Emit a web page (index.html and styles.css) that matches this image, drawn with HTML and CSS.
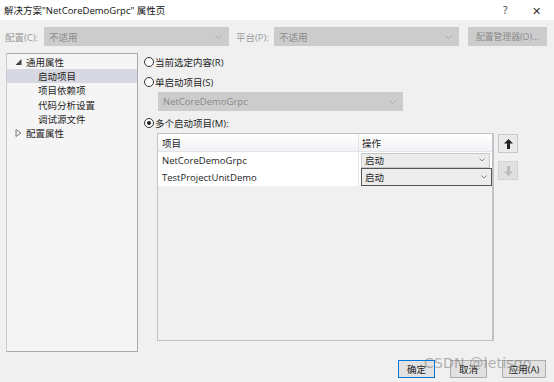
FILE: index.html
```html
<!DOCTYPE html>
<html lang="zh-CN">
<head>
  <meta charset="UTF-8" />
  <title>解决方案"NetCoreDemoGrpc" 属性页</title>
  <link rel="stylesheet" href="styles.css">
</head>
<body>
  <div class="dialog">
    <div class="titlebar">
      <span class="title">解决方案"NetCoreDemoGrpc" 属性页</span>
      <span class="help">?</span>
      <span class="close">✕</span>
    </div>

    <div class="toolbar">
      <span class="lbl">配置(C):</span>
      <div class="combo combo-off w185"><span>不适用</span><svg class="chev" width="7" height="4" viewBox="0 0 7 4"><polyline points="0.5,0.5 3.5,3.5 6.5,0.5" fill="none" stroke="#a8a8a8" stroke-width="1"/></svg></div>
      <span class="lbl lbl2">平台(P):</span>
      <div class="combo combo-off w185"><span>不适用</span><svg class="chev" width="7" height="4" viewBox="0 0 7 4"><polyline points="0.5,0.5 3.5,3.5 6.5,0.5" fill="none" stroke="#a8a8a8" stroke-width="1"/></svg></div>
      <div class="btn btn-off cfg">配置管理器(O)...</div>
    </div>

    <div class="main">
      <div class="tree">
        <div class="node"><svg class="twist" width="6" height="6" viewBox="0 0 6 6"><polygon points="6,0 6,6 0,6" fill="#444"/></svg>通用属性</div>
        <div class="node child selected">启动项目</div>
        <div class="node child">项目依赖项</div>
        <div class="node child">代码分析设置</div>
        <div class="node child">调试源文件</div>
        <div class="node"><svg class="twist" width="6" height="8" viewBox="0 0 6 8"><polygon points="0.5,0.5 5.5,4 0.5,7.5" fill="none" stroke="#777" stroke-width="1"/></svg>配置属性</div>
      </div>

      <div class="content">
        <label class="radio"><span class="dot"></span>当前选定内容(R)</label>
        <label class="radio"><span class="dot"></span>单启动项目(S)</label>
        <div class="combo combo-off single"><span>NetCoreDemoGrpc</span><svg class="chev" width="7" height="4" viewBox="0 0 7 4"><polyline points="0.5,0.5 3.5,3.5 6.5,0.5" fill="none" stroke="#a8a8a8" stroke-width="1"/></svg></div>
        <label class="radio"><span class="dot on"></span>多个启动项目(M):</label>

        <div class="grid-row">
          <div class="table">
            <div class="thead">
              <div class="c1">项目</div>
              <div class="c2">操作</div>
            </div>
            <div class="tr">
              <div class="c1">NetCoreDemoGrpc</div>
              <div class="c2"><div class="combo cell"><span>启动</span><svg class="chev" width="6" height="4" viewBox="0 0 6 4"><polyline points="0.5,0.5 3,3 5.5,0.5" fill="none" stroke="#888" stroke-width="1"/></svg></div></div>
            </div>
            <div class="tr">
              <div class="c1">TestProjectUnitDemo</div>
              <div class="c2"><div class="combo cell focus"><span>启动</span><svg class="chev" width="6" height="4" viewBox="0 0 6 4"><polyline points="0.5,0.5 3,3 5.5,0.5" fill="none" stroke="#888" stroke-width="1"/></svg></div></div>
            </div>
          </div>
          <div class="movers">
            <div class="mv"><svg width="9" height="10" viewBox="0 0 9 10"><polygon points="4.5,0 9,4.5 6,4.5 6,10 3,10 3,4.5 0,4.5" fill="#222"/></svg></div>
            <div class="mv mv-off"><svg width="9" height="10" viewBox="0 0 9 10"><polygon points="4.5,10 9,5.5 6,5.5 6,0 3,0 3,5.5 0,5.5" fill="#bdbdbd"/></svg></div>
          </div>
        </div>
      </div>
    </div>

    <div class="footer">
      <div class="btn default">确定</div>
      <div class="btn">取消</div>
      <div class="btn">应用(A)</div>
      <span class="watermark">CSDN @letisgo</span>
    </div>
  </div>
</body>
</html>
```
FILE: styles.css
```css
body { margin: 0; background: #f0f0f0; font-family: "Open Sans", "Noto Sans CJK SC", sans-serif; font-size: 9.5px; color: #1e1e1e; }
.dialog { width: 554px; height: 382px; position: relative; overflow: hidden; }

.titlebar { height: 20px; background: #fff; display: flex; align-items: center; padding-left: 4px; }
.title { flex: 1; font-size: 9.5px; color: #111; }
.help { width: 12px; font-size: 10.5px; color: #333; margin-right: 17px; }
.close { font-size: 11px; color: #333; margin-right: 13px; }

.toolbar { display: flex; align-items: center; height: 19px; margin-top: 7px; padding-left: 5px; }
.lbl { color: #9a9a9a; width: 39px; }
.lbl2 { margin-left: 7px; width: 38px; }
.combo { display: flex; align-items: center; justify-content: space-between; box-sizing: border-box; padding: 0 6px 0 4px; }
.combo-off { background: #cccccc; border: 1px solid #cccccc; color: #8a8a8a; height: 19px; }
.w185 { width: 185px; }
.btn { display: flex; align-items: center; justify-content: center; box-sizing: border-box; height: 18px; background: #e1e1e1; border: 1px solid #adadad; color: #1e1e1e; white-space: nowrap; }
.btn-off { background: #cccccc; border-color: #cccccc; color: #8a8a8a; }
.cfg { width: 79px; margin-left: 9px; height: 19px; font-size: 8.8px; }

.main { display: flex; margin-top: 7px; height: 299px; }
.tree { width: 132px; margin-left: 6px; box-sizing: border-box; background: #f5f5f5; border: 1px solid #a9a9b1; border-left-color: #c9c9d0; padding-top: 1px; }
.node { height: 14.2px; display: flex; align-items: center; padding-left: 7px; color: #1e1e1e; }
.twist { width: 9px; margin-right: 3px; }
.child { padding-left: 31px; }
.selected { background: #d8d8e2; }

.content { margin-left: 8px; flex: 1; }
.radio { display: flex; align-items: center; height: 18px; }
.radio + .radio { margin-top: 2px; }
.dot { width: 8px; height: 8px; border: 1px solid #333; border-radius: 50%; background: #fff; margin-right: 1px; margin-left: -2px; box-sizing: content-box; position: relative; }
.dot.on::after { content: ""; position: absolute; left: 2px; top: 2px; width: 4px; height: 4px; border-radius: 50%; background: #222; }
.single { width: 245px; margin: 1px 0 3px 12px; }

.grid-row { display: flex; margin: 1px 0 0 11px; }
.table { width: 337px; height: 208px; box-sizing: border-box; border: 1px solid #c2c2c8; border-right-width: 2px; background: #f0f0f0; }
.thead { display: flex; height: 17px; background: linear-gradient(#ffffff, #f2f3f6); border-bottom: 1px solid #e4e4e4; }
.tr { display: flex; height: 16px; background: #fff; }
.tr:last-child { height: 18px; }
.c1 { width: 201px; display: flex; align-items: center; padding-left: 4px; box-sizing: border-box; border-right: 1px solid #e4e4e4; }
.c2 { flex: 1; display: flex; align-items: center; padding-left: 2px; }
.thead .c2 { padding-left: 3px; }
.cell { width: 129px; height: 15px; background: #ececec; border: 1px solid #c8c8c8; padding: 0 4px 0 3px; }
.cell.focus { height: 18px; border: 1px solid #555; width: 131px; }

.movers { margin-left: 4px; display: flex; flex-direction: column; gap: 8px; padding-top: 1px; }
.mv { width: 20px; height: 19px; box-sizing: border-box; border: 1px solid #c8c8c8; background: #eaeaea; display: flex; align-items: center; justify-content: center; }
.mv-off { background: #e0e0e0; border-color: #d2d2d2; }

.footer { display: flex; gap: 15px; justify-content: flex-end; padding-right: 8px; margin-top: 8px; }
.footer .btn { width: 37px; }
.footer .btn:nth-child(3) { width: 44px; }
.default { border-color: #0078d7; }
.watermark { position: absolute; left: 424px; top: 355px; font-family: "DejaVu Sans", sans-serif; font-size: 14px; color: rgba(110, 110, 110, 0.5); letter-spacing: 0.2px; }
```
